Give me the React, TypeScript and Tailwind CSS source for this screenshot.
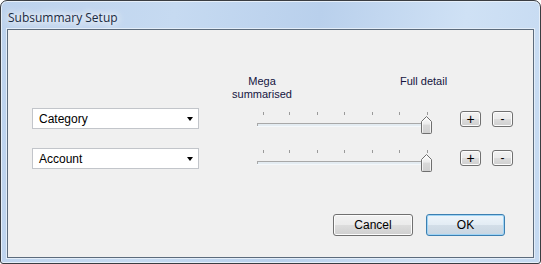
import React from 'react';

const ticks = [9, 35, 63, 90, 118, 145, 173];

const Slider: React.FC<{ top: string }> = ({ top }) => (
  <svg width="180" height="25" className={`shrink-0 ${top}`} viewBox="0 0 180 25">
    {ticks.map((x) => (
      <line key={x} x1={x + 0.5} y1="2" x2={x + 0.5} y2="5" stroke="#9a9a9a" strokeWidth="1" />
    ))}
    <rect x="3" y="13" width="174" height="4" fill="#e4ecf2" />
    <line x1="3" y1="13.5" x2="177" y2="13.5" stroke="#a8a8a8" />
    <line x1="3.5" y1="13" x2="3.5" y2="17" stroke="#a8a8a8" />
    <line x1="3" y1="16.5" x2="177" y2="16.5" stroke="#f4f8fb" />
    <defs>
      <linearGradient id="thumb" x1="0" y1="0" x2="0" y2="1">
        <stop offset="0" stopColor="#fbfbfb" />
        <stop offset="0.45" stopColor="#ececec" />
        <stop offset="0.5" stopColor="#d9d9d9" />
        <stop offset="1" stopColor="#d0d0d0" />
      </linearGradient>
    </defs>
    <path
      d="M167.5 22.5 V11.5 L172.5 6.5 L177.5 11.5 V22.5 Q177.5 23.5 176.5 23.5 H168.5 Q167.5 23.5 167.5 22.5 Z"
      fill="url(#thumb)"
      stroke="#6f6f6f"
    />
    <path d="M168.5 22.5 V12 L172.5 8 L176.5 12 V22.5" fill="none" stroke="#ffffff" strokeOpacity="0.7" />
  </svg>
);

const Combo: React.FC<{ label: string }> = ({ label }) => (
  <div className="w-[167px] h-[21px] shrink-0 bg-white border border-[#c2c5ca] flex items-center pl-[6px] pr-[5px]">
    <span className="flex-1 text-[12px] text-black leading-none">{label}</span>
    <span className="w-0 h-0 border-l-[3.5px] border-r-[3.5px] border-t-[4px] border-l-transparent border-r-transparent border-t-black" />
  </div>
);

const winBtn =
  'shrink-0 rounded-[3px] border border-[#707070] bg-[linear-gradient(180deg,#f2f2f2_0%,#ebebeb_48%,#dddddd_50%,#cfcfcf_100%)] shadow-[inset_0_0_0_1px_#fcfcfc] flex items-center justify-center text-black';

const Row: React.FC<{ label: string; sliderTop: string; btnTop: string }> = ({ label, sliderTop, btnTop }) => (
  <div className="flex items-start h-[40px]">
    <div className="ml-[24px]">
      <Combo label={label} />
    </div>
    <div className="ml-[55px]">
      <Slider top={sliderTop} />
    </div>
    <div className={`flex ml-[26px] gap-[11px] ${btnTop}`}>
      <button className={`${winBtn} w-[21px] h-[16px] text-[14px] leading-none`}>+</button>
      <button className={`${winBtn} w-[21px] h-[16px] text-[12px] leading-none`}>-</button>
    </div>
  </div>
);

export default function App() {
  return (
    <div className="w-[541px] h-[264px] font-['Liberation_Sans',Arial,sans-serif]">
      <div className="w-full h-full rounded-t-[7px] rounded-b-[3px] border border-[#3a3d42] bg-[linear-gradient(100deg,#bcd2ed_0%,#c6daf1_30%,#b9d0ec_55%,#cfe1f5_80%,#c4d9f1_100%)] shadow-[inset_0_0_0_1px_#e6eff9] flex flex-col px-[6px] pt-[27px] pb-[5px]">
        <div className="-mt-[21px] h-[21px] ml-[1px] flex items-center">
          <span className="font-['Open_Sans',sans-serif] text-[12px] text-[#1b2a3f] [text-shadow:0_0_6px_#ffffff,0_0_10px_#ffffff,0_0_14px_#ffffff]">
            Subsummary Setup
          </span>
        </div>
        <div className="mt-[1px] flex-1 border border-[#5c6b7c] shadow-[0_0_0_1px_#e3edf8] bg-[#f0f0f0] flex flex-col">
          <div className="flex items-start h-[45px] shrink-0" />
          <div className="flex items-start h-[33px] shrink-0 text-[11px] leading-[13px] text-[#141440]">
            <div className="ml-[219px] w-[70px] text-center">
              Mega
              <br />
              summarised
            </div>
            <div className="ml-[103px]">Full detail</div>
          </div>
          <Row label="Category" sliderTop="mt-[2px]" btnTop="mt-[3px]" />
          <Row label="Account" sliderTop="mt-0" btnTop="mt-[2px]" />
          <div className="flex mt-[26px]">
            <button className={`${winBtn} ml-[325px] w-[80px] h-[22px] text-[12px]`}>Cancel</button>
            <button className="ml-[13px] w-[79px] h-[22px] shrink-0 rounded-[3px] border border-[#3c7fb1] bg-[linear-gradient(180deg,#eef5fb_0%,#e3ecf4_48%,#d3dee8_50%,#c9d6e2_100%)] shadow-[inset_0_0_0_1px_#9fd4f5] flex items-center justify-center text-[12px] text-black">
              OK
            </button>
          </div>
        </div>
      </div>
    </div>
  );
}
